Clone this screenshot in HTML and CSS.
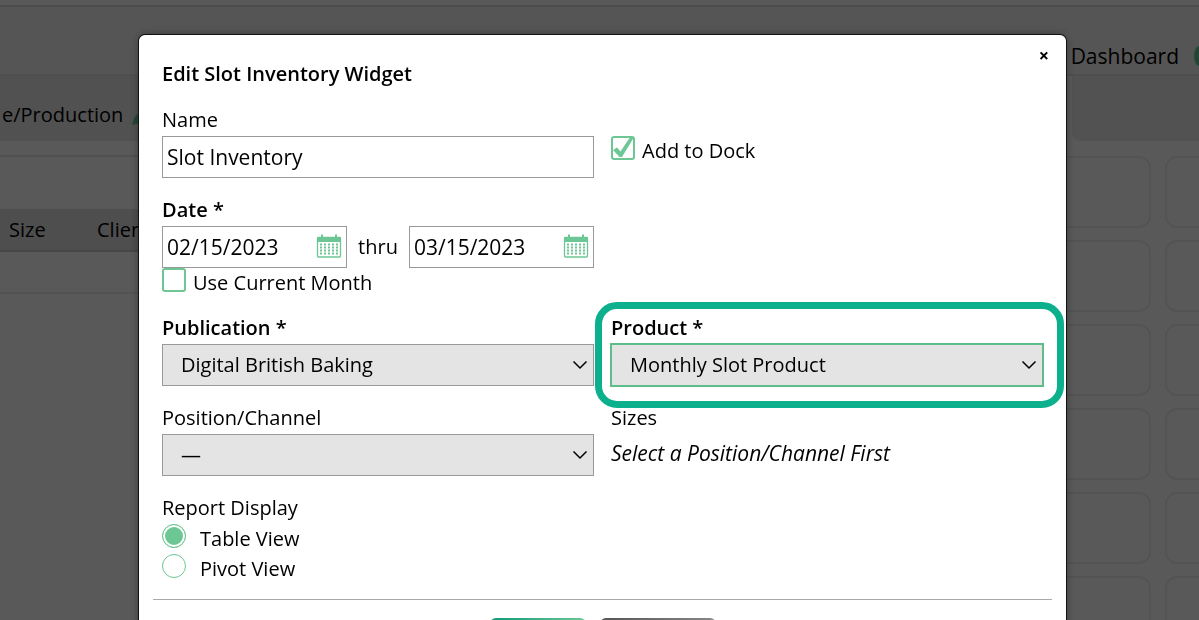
FILE: index.html
```html
<!DOCTYPE html>
<html lang="en">
<head>
<meta charset="utf-8">
<title>Edit Slot Inventory Widget</title>
<link rel="stylesheet" href="styles.css">
</head>
<body>
<svg class="sprite" aria-hidden="true">
  <symbol id="calendar" viewBox="0 0 26 26">
    <path d="M1 4h24v5H1z" fill="#6cc795"/>
    <path d="M6 1.500v4M20 1.500v4" stroke="#6cc795" stroke-width="2"/>
    <rect x="1.500" y="4.500" width="23" height="19.500" rx="1" fill="none" stroke="#6cc795" stroke-width="1.300"/>
    <path d="M4 11.500h19M4 14.500h19M4 17.500h19M4 20.500h19" stroke="#6cc795" stroke-width="2" stroke-dasharray="2 2"/>
  </symbol>
  <symbol id="chevron" viewBox="0 0 16 10">
    <path d="M1.500 1.500L8 8l6.500-6.500" fill="none" stroke="#000" stroke-width="1.500"/>
  </symbol>
</svg>

<div class="page">
  <div class="topline"></div>
  <header class="header"><span>Dashboard</span><span class="dot"></span></header>
  <div class="tabs">
    <div class="tab">e/Production
      <svg class="pencil" viewBox="0 0 20 20"><path d="M0 20L2 13L14 0L20 6L8 18z" fill="#6cc795"/></svg>
    </div>
    <div class="tab tab-side"></div>
  </div>
  <main class="board">
    <section class="panel">
      <table class="list">
        <thead><tr><th class="col-size">Size</th><th>Client</th></tr></thead>
        <tbody><tr><td></td><td></td></tr></tbody>
      </table>
    </section>
    <section class="cards">
      <div class="card"></div><div class="card"></div>
      <div class="card"></div><div class="card"></div>
      <div class="card"></div><div class="card"></div>
      <div class="card"></div><div class="card"></div>
      <div class="card"></div><div class="card"></div>
      <div class="card"></div><div class="card"></div>
    </section>
  </main>
</div>

<div class="overlay">
  <form class="dialog" role="dialog" aria-labelledby="title">
    <button class="close" type="button">×</button>
    <h1 class="title" id="title">Edit Slot Inventory Widget</h1>
    <div class="grid">
      <div class="field">
        <label class="label" for="name">Name</label>
        <input class="input" id="name" type="text" value="Slot Inventory">
      </div>
      <div class="field dock">
        <label class="choice">
          <span class="mark"><input class="check" type="checkbox" checked>
            <svg class="tick" viewBox="0 0 24 24"><path d="M2 14L6 11.500L9.500 15.500L18.500 2L22.500 2L11 21L8.500 21z" fill="#6cc795"/></svg></span>
          <span>Add to Dock</span>
        </label>
      </div>
      <div class="field">
        <label class="label required" for="from">Date *</label>
        <div class="dates">
          <div class="control"><input class="input" id="from" type="text" value="02/15/2023"><svg class="calendar"><use href="#calendar"/></svg></div>
          <label for="to">thru</label>
          <div class="control"><input class="input" id="to" type="text" value="03/15/2023"><svg class="calendar"><use href="#calendar"/></svg></div>
        </div>
        <label class="choice compact">
          <span class="mark"><input class="check" type="checkbox"></span>
          <span>Use Current Month</span>
        </label>
      </div>
      <div class="field"></div>
      <div class="field">
        <label class="label required" for="publication">Publication *</label>
        <div class="control"><select class="input select" id="publication"><option>Digital British Baking</option></select><svg class="chevron"><use href="#chevron"/></svg></div>
      </div>
      <div class="field highlighted">
        <label class="label required" for="product">Product *</label>
        <div class="control"><select class="input select active" id="product"><option>Monthly Slot Product</option></select><svg class="chevron"><use href="#chevron"/></svg></div>
      </div>
      <div class="field">
        <label class="label" for="position">Position/Channel</label>
        <div class="control"><select class="input select" id="position"><option>—</option></select><svg class="chevron"><use href="#chevron"/></svg></div>
      </div>
      <div class="field">
        <span class="label">Sizes</span>
        <em class="hint">Select a Position/Channel First</em>
      </div>
      <fieldset class="field views">
        <legend class="label">Report Display</legend>
        <label class="choice wide"><input class="radio" type="radio" name="view" checked><span>Table View</span></label>
        <label class="choice wide"><input class="radio" type="radio" name="view"><span>Pivot View</span></label>
      </fieldset>
    </div>
    <div class="actions">
      <button class="button save" type="submit" aria-label="Save"></button>
      <button class="button cancel" type="button" aria-label="Cancel"></button>
    </div>
  </form>
</div>
</body>
</html>
```
FILE: styles.css
```css
* { box-sizing: border-box; }
body {
  margin: 0;
  height: 100vh;
  overflow: hidden;
  font: 20px/30px "Open Sans", sans-serif;
  color: #000;
}
.sprite { display: none; }

/* Dashboard behind the dialog */
.page { height: 100vh; overflow: hidden; background: #fff; }
.topline { height: 7px; border-bottom: 2px solid #dcdcdc; }
.header {
  display: flex;
  justify-content: flex-end;
  align-items: center;
  gap: 15px;
  height: 69px;
  padding-top: 30px;
  background: #f4f4f4;
  border-bottom: 2px solid #e2e2e2;
  font-size: 21px;
}
.dot { width: 5px; height: 20px; border-radius: 100% 0 0 100% / 50%; background: #6cc795; }
.tabs { display: flex; gap: 5px; height: 65px; }
.tab {
  display: flex;
  align-items: center;
  flex: 1;
  gap: 9px;
  padding: 13px 0 0 2px;
  background: #e8e8e8;
}
.tab-side { flex: 0 0 127px; background: #ebebeb; border-radius: 0 0 0 8px; }
.pencil { width: 20px; height: 20px; }
.board { display: flex; gap: 20px; padding-top: 14px; }
.panel { flex: 1; padding-top: 52px; border-top: 2px solid #e6e6e6; }
.list { width: 100%; border-collapse: collapse; }
.list th {
  height: 42px;
  padding: 0 0 0 9px;
  background: #dedede;
  border-bottom: 2px solid #c8c8c8;
  font-weight: 400;
  text-align: left;
}
.list .col-size { width: 88px; }
.list td { height: 42px; border-bottom: 2px solid #ececec; }
.cards {
  display: grid;
  grid-template-columns: 110px 110px;
  grid-auto-rows: 72px;
  gap: 12px 14px;
  margin: 1px -76px 0 0;
}
.card { border: 2px solid #ededed; border-radius: 12px; }

/* Dialog */
.overlay {
  position: fixed;
  inset: 0;
  overflow: hidden;
  padding: 35px 133px 0 139px;
  background: rgba(0, 0, 0, 0.65);
}
.dialog {
  position: relative;
  padding: 24px 14px;
  background: #fff;
  border-radius: 6px;
  box-shadow: 0 0 0 1px #111, 0 0 10px rgba(0, 0, 0, 0.4);
}
.close {
  position: absolute;
  top: 10px;
  right: 12px;
  width: 20px;
  height: 20px;
  padding: 0;
  border: 0;
  background: none;
  color: #000;
  font: 700 18px/20px "Open Sans", sans-serif;
}
.title { margin: 0; padding: 0 9px; font-size: 20px; line-height: 30px; font-weight: 600; }
.grid {
  display: grid;
  grid-template-columns: 1fr 1fr;
  gap: 18px 17px;
  padding: 17px 9px 15px;
}
.field { min-width: 0; }
.label { display: block; height: 30px; padding: 0; line-height: 28px; }
.required { font-weight: 600; }
.dock { padding-top: 30px; }
.control { position: relative; flex: 1; min-width: 0; }
.input {
  display: block;
  width: 100%;
  height: 42px;
  margin: 0;
  padding: 0 4px;
  border: 1px solid #999;
  border-radius: 0;
  background: #fff;
  color: #000;
  font: inherit;
  font-size: 21px;
}
.select { appearance: none; padding: 0 30px 0 18px; background: #e4e4e4; font-size: 20px; }
.active { border-color: #5fbd8a; outline: 1px solid #5fbd8a; }
.chevron { position: absolute; top: 16px; right: 6px; width: 16px; height: 10px; pointer-events: none; }
.calendar { position: absolute; top: 7px; right: 5px; width: 26px; height: 26px; }
.dates { display: flex; align-items: center; gap: 11px; }
.choice { display: flex; gap: 7px; line-height: 30px; }
.compact { height: 28px; }
.wide { gap: 14px; }
.mark { position: relative; width: 24px; height: 24px; }
.check, .radio {
  display: block;
  appearance: none;
  width: 24px;
  height: 24px;
  margin: 0;
  border: 2px solid #6cc795;
  border-radius: 3px;
  background: #fff;
}
.tick { position: absolute; inset: 0; width: 24px; height: 24px; pointer-events: none; }
.radio { border-width: 1px; border-radius: 50%; }
.radio:checked { background: #6cc795; box-shadow: inset 0 0 0 2px #fff; }
.highlighted { position: relative; }
.highlighted::after {
  content: "";
  position: absolute;
  inset: -12px -21px -22px -16px;
  border: 7px solid #0db08c;
  border-radius: 22px;
  pointer-events: none;
}
.hint { display: block; font-size: 21px; line-height: 38px; }
.views { margin: 0; padding: 0; border: 0; }
.actions {
  display: flex;
  justify-content: center;
  gap: 14px;
  padding-top: 18px;
  border-top: 1px solid #aaa;
}
.button { height: 42px; border: 0; border-radius: 6px; }
.save { width: 96px; background: linear-gradient(90deg, #0f9a78, #6cc795); }
.cancel { width: 116px; background: linear-gradient(90deg, #555, #888); }
```
